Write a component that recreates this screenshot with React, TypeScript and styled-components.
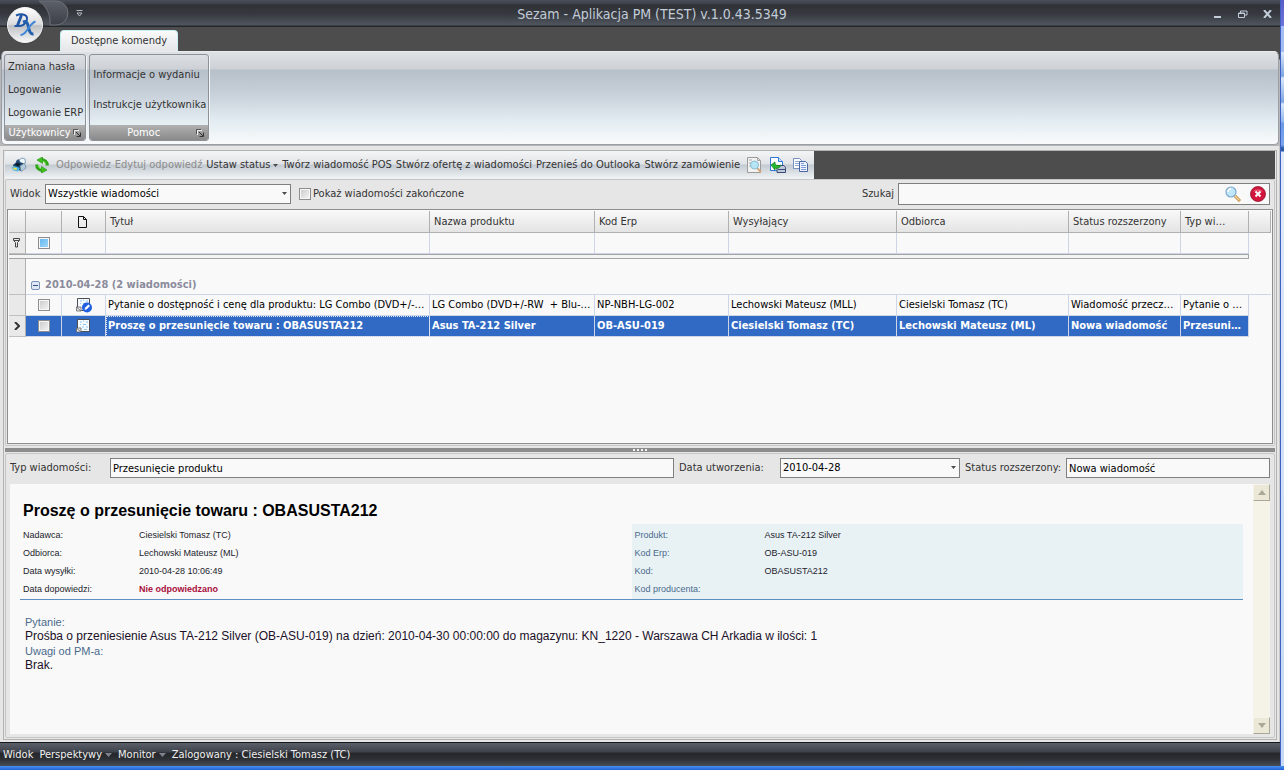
import React from "react";
import styled, { createGlobalStyle, css } from "styled-components";

const UI_FONT = `"DejaVu Sans Condensed", "Noto Sans", sans-serif`;
const DOC_FONT = `"Liberation Sans", Arial, sans-serif`;

const GlobalStyle = createGlobalStyle`
  *, *::before, *::after { box-sizing: border-box; }
  body { margin: 0; background: #2f7ce6; font: 11px/14px ${UI_FONT}; color: #333; }
  button, input, select { font: inherit; color: inherit; margin: 0; }
`;

/* ---------- window frame ---------- */

const Desktop = styled.div`
  display: flex;
  min-height: 100vh;
  padding-bottom: 4px;
  background: linear-gradient(to bottom, #4a90ee, #1f63d6) bottom / 100% 4px no-repeat;
`;

const AppWindow = styled.div`
  flex: 1;
  min-width: 0;
  display: flex;
  flex-direction: column;
  background: #e6e6e6;
`;

const NeighbourWindow = styled.div`
  width: 4px;
  border-left: 1px solid #3d62c4;
  background: linear-gradient(
    to bottom,
    #5a5cc8 0, #6d74d8 26px, #a4bcf4 26px, #a4bcf4 52px,
    #dbe8fa 52px, #7ca4e4 76px, #dbe8fa 78px, #7ca4e4 102px,
    #dbe8fa 104px, #8fb4ee 122px, #6c9ae6 123px, #79a5ee 145px,
    #2c5aa8 148px, #2c5aa8 151px, #dfe9f8 152px, #c6d9f4 100%
  );
`;

const TitleBar = styled.header`
  display: grid;
  grid-template-columns: 1fr auto 1fr;
  align-items: center;
  height: 27px;
  color: #c3ccd9;
  background: linear-gradient(to bottom, #4a4f59 0, #3b3f48 4px, #2f3135 5px, #36393f 14px, #50555e 25px, #23262b 26px, #23262b 27px);
`;

const AppTitle = styled.h1`
  margin: 0;
  padding-left: 24px;
  font-size: 14px;
  font-weight: 400;
  line-height: 16px;
`;

const QuickAccess = styled.div`
  position: relative;
  align-self: stretch;
`;

const LogoDrawing = styled.svg`
  position: absolute;
  left: 0;
  top: 0;
  display: block;
`;

const WindowButtons = styled.div`
  display: flex;
  justify-content: flex-end;
`;

const BareButton = styled.button`
  display: flex;
  align-items: center;
  padding: 0;
  border: 0;
  background: none;
`;

const WindowButton = styled(BareButton)`
  justify-content: center;
  width: 25px;
  height: 20px;
`;

const TabStrip = styled.nav`
  display: flex;
  align-items: flex-end;
  height: 24px;
  padding-left: 60px;
  background: #4d4d4d;
`;

const RibbonTab = styled.button`
  height: 21px;
  padding: 0 10px;
  border: 1px solid #c9eef4;
  border-bottom: 0;
  border-radius: 4px 4px 0 0;
  background: linear-gradient(to bottom, #fafafa, #e4e6e9);
`;

/* ---------- ribbon ---------- */

const RibbonShell = styled.div`
  background: linear-gradient(to bottom, #4d4d4d 0, #4d4d4d 8px, #b8b8b8 9px);
`;

const Ribbon = styled.section`
  display: flex;
  gap: 3px;
  height: 94px;
  margin: 0 1px 0 1px;
  padding: 2px;
  border: 1px solid #9a9ea6;
  border-top-color: #e8eaec;
  border-radius: 5px;
  background: linear-gradient(to bottom, #dfe2e5 0, #cdd1d6 17px, #b7bfc9 18px, #c6ced8 40px, #e3edf2 70px, #f7f9fa 90px);
`;

const RibbonGroup = styled.div`
  display: flex;
  flex-direction: column;
  height: 87px;
  border: 1px solid #8d9299;
  border-radius: 3px;
  overflow: hidden;
  box-shadow: 1px 1px 0 #f5f7f9;
`;

const GroupItems = styled.div<{ $gap: number }>`
  flex: 1;
  display: flex;
  flex-direction: column;
  justify-content: center;
  align-items: flex-start;
  gap: ${(p) => p.$gap}px;
  padding: 0 2px 0 3px;
`;

const GroupCaption = styled.div`
  display: flex;
  align-items: center;
  height: 15px;
  padding: 0 4px 0 1px;
  color: #fff;
  background: linear-gradient(to bottom, #b0b0b0, #8a8a8a);
  & > span { flex: 1; text-align: center; }
`;

/* ---------- work area ---------- */

const Workspace = styled.main`
  flex: 1;
  display: flex;
  flex-direction: column;
  padding: 4px 2px 2px 3px;
  border-top: 1px solid #b4b4b4;
  border-right: 1px solid #c8c8c8;
`;

const WorkFrame = styled.div`
  flex: 1;
  display: flex;
  flex-direction: column;
  border: 1px solid #b2b2b2;
  padding: 0 1px 1px;
`;

const ToolbarRow = styled.div`
  display: flex;
  background: #4d4d4d;
`;

const Toolbar = styled.div`
  display: flex;
  align-items: center;
  gap: 4px;
  height: 28px;
  padding: 0 5px 0 6px;
  background: linear-gradient(to bottom, #f4f5f6 0, #e0e3e6 13px, #c3cad1 14px, #d6dce1 20px, #f2f5f6 28px);
`;

const ToolIcons = styled.div`
  display: flex;
  align-items: center;
  gap: 7px;
  padding-right: 2px;
`;

const TrailingIcons = styled(ToolIcons)`
  padding: 0 0 0 2px;
`;

const ToolButton = styled(BareButton)`
  gap: 3px;
  white-space: nowrap;
  &:disabled { color: #8d8d8d; }
`;

const Pane = styled.section<{ $grow: number }>`
  flex: ${(p) => p.$grow} 1 0;
  display: flex;
  flex-direction: column;
  border: 1px solid #c6c6c6;
  border-radius: 2px;
  background: #e6e6e6;
`;

const FilterBar = styled.div`
  display: flex;
  align-items: center;
  height: 29px;
  padding: 0 4px 1px 4px;
`;

const Label = styled.label<{ $width?: number }>`
  display: block;
  flex: none;
  white-space: nowrap;
  ${(p) => p.$width && css`width: ${p.$width}px;`}
`;

const box = css`
  height: 20px;
  border: 1px solid #7f7f7f;
  border-radius: 0;
  background: #f9f9f9;
  color: #000;
`;

const Combo = styled.span<{ $width: number }>`
  position: relative;
  flex: none;
  width: ${(p) => p.$width}px;
  & > svg { position: absolute; right: 4px; top: 8px; pointer-events: none; }
`;

const Select = styled.select`
  ${box}
  display: block;
  width: 100%;
  padding: 0 16px 0 2px;
  appearance: none;
`;

const TextField = styled.input<{ $width?: number }>`
  ${box}
  min-width: 0;
  padding: 0 2px;
  ${(p) => (p.$width ? css`flex: none; width: ${p.$width}px;` : css`flex: 1;`)}
`;

const Tick = styled.input<{ $tone?: "blue" }>`
  appearance: none;
  flex: none;
  display: block;
  width: 12px;
  height: 12px;
  border: 1px solid #8d8d8d;
  background: ${(p) => (p.$tone === "blue" ? "linear-gradient(135deg, #5fb4f0, #a9dcfa)" : "linear-gradient(135deg, #c9c9c9, #f6f6f6)")};
  box-shadow: inset 0 0 0 1px #f7f7f7;
`;

const ShowClosed = styled.div`
  display: flex;
  align-items: center;
  gap: 2px;
  margin: 0 auto 0 8px;
`;

const SearchBox = styled.div`
  ${box}
  display: flex;
  align-items: center;
  gap: 9px;
  width: 372px;
  height: 22px;
  margin-left: 4px;
  padding-right: 3px;
`;

const SearchInput = styled.input`
  flex: 1;
  min-width: 0;
  border: 0;
  background: none;
  outline: 0;
`;

/* ---------- message grid ---------- */

const GridBox = styled.div`
  flex: 1;
  margin: 0 1px 1px 1px;
  padding: 1px;
  border: 1px solid #8e8e8e;
  background: #f9f9f9;
`;

const Grid = styled.table`
  width: 100%;
  table-layout: fixed;
  border-collapse: separate;
  border-spacing: 0;
`;

const HeadCell = styled.th`
  height: 22px;
  padding: 0 12px 0 4px;
  border-right: 1px solid #b0b0b0;
  border-bottom: 1px solid #b0b0b0;
  background: linear-gradient(to bottom, #f8f8f8, #e4e4e4);
  font-weight: 400;
  text-align: left;
  white-space: nowrap;
  overflow: hidden;
  text-overflow: ellipsis;
  & > svg { display: block; margin: 0 12px; }
`;

const IndicatorCell = styled.td`
  padding: 0;
  border-right: 1px solid #b0b0b0;
  border-bottom: 1px solid #c0c0c0;
  background: #e9e9e9;
  & > svg { display: block; margin: 0 auto; }
`;

const FilterCell = styled.td`
  height: 21px;
  padding: 0;
  border-right: 1px solid #cdd5e6;
  border-bottom: 1px solid #cdd5e6;
  & > input { margin: 0 auto; }
`;

const DividerCell = styled.td`
  height: 5px;
  padding: 0;
  border: 1px solid #a4a4a4;
  border-left: 0;
  background: #f4f4f4;
`;

const GroupCell = styled.td`
  height: 36px;
  padding: 0 4px 2px 5px;
  border-bottom: 1px solid #cdd5e6;
  vertical-align: bottom;
  color: #8b8b9c;
  font-weight: 700;
`;

const GroupToggle = styled(BareButton)`
  gap: 5px;
`;

const Cell = styled.td`
  height: 21px;
  padding: 0 2px;
  border-right: 1px solid #cdd5e6;
  border-bottom: 1px solid #cdd5e6;
  white-space: pre;
  overflow: hidden;
  text-overflow: ellipsis;
  & > input, & > svg { display: block; margin: 0 auto; }
`;

const FocusCell = styled(Cell)`
  outline: 1px dotted #dfe8f6;
  outline-offset: -1px;
`;

const MessageRow = styled.tr<{ $selected?: boolean }>`
  color: #000;
  ${(p) => p.$selected && css`
    font-weight: 700;
    ${Cell} { background: #316ac5; color: #fff; }
  `}
`;

const EmptyCell = styled.td`
  padding: 0;
`;

const Splitter = styled.div`
  display: flex;
  align-items: center;
  justify-content: center;
  gap: 2px;
  height: 4px;
  margin: 2px 0 1px;
  background: #8c8c8c;
  & > i { width: 2px; height: 2px; background: #f4f4f4; }
`;

/* ---------- message preview ---------- */

const Preview = styled.div`
  flex: 1;
  display: flex;
  margin: 1px 4px 3px 4px;
  background: #f9f9f9;
`;

const Doc = styled.article`
  flex: 1;
  min-width: 0;
  padding: 16px 10px 0 10px;
  font: 9px/18px ${DOC_FONT};
  color: #1c1c2c;
`;

const DocTitle = styled.h2`
  margin: 0;
  padding-left: 3px;
  font-size: 16px;
  line-height: 22px;
  color: #000;
`;

const MetaColumns = styled.div`
  display: grid;
  grid-template-columns: 1fr 1fr;
  padding-top: 2px;
  border-bottom: 1px solid #5b8fc4;
`;

const MetaList = styled.dl<{ $shaded?: boolean; $termWidth: number }>`
  display: grid;
  grid-template-columns: ${(p) => p.$termWidth}px 1fr;
  grid-auto-rows: 18px;
  margin: 0;
  padding: 2px 0 1px 3px;
  ${(p) => p.$shaded && css`
    background: #e8f2f5;
    dt { color: #4a6a8c; }
  `}
  dd { margin: 0; }
`;

const Alert = styled.strong`
  color: #a80f3c;
`;

const Body = styled.div`
  padding: 15px 0 0 5px;
  font-size: 12px;
  line-height: 15px;
`;

const BodyLabel = styled.h3`
  margin: 0;
  font-size: 11px;
  line-height: 14px;
  font-weight: 400;
  color: #4a6a8c;
`;

const BodyText = styled.p`
  margin: 0;
  color: #201028;
`;

const DetailLabel = styled(Label)`
  padding-left: 5px;
`;

const ScrollRail = styled.div`
  display: flex;
  flex-direction: column;
  justify-content: space-between;
  width: 17px;
  background: #f5f3e8;
`;

const ScrollButton = styled(BareButton)`
  justify-content: center;
  height: 17px;
  border: 1px solid #f6f4ea;
  border-right-color: #aca899;
  border-bottom-color: #aca899;
  background: #ebe8d8;
`;

/* ---------- status bar ---------- */

const StatusBar = styled.footer`
  display: flex;
  align-items: center;
  height: 24px;
  padding: 0 3px;
  gap: 6px;
  color: #f2f2f2;
  border-top: 1px solid #15171a;
  background: linear-gradient(to bottom, #5a5f69 0, #3e424b 9px, #25272a 10px, #2c2f33 16px, #484c54 23px);
`;

/* ---------- drawings ---------- */

const Caret = ({ color = "#4a4a4a", wide = 5 }: { color?: string; wide?: number }) => (
  <svg width={wide} height={wide > 5 ? 4 : 3} viewBox="0 0 6 4" preserveAspectRatio="none" aria-hidden="true">
    <path d="M0 0h6L3 4z" fill={color} />
  </svg>
);

const Logo = () => (
  <LogoDrawing width="90" height="48" viewBox="0 0 90 48" aria-hidden="true">
    <defs>
      <linearGradient id="orb" x1="0" y1="0" x2="0" y2="1">
        <stop offset="0" stopColor="#ffffff" />
        <stop offset="0.48" stopColor="#dcdcde" />
        <stop offset="0.52" stopColor="#bfc0c3" />
        <stop offset="1" stopColor="#f8f8f8" />
      </linearGradient>
      <linearGradient id="tail" x1="0" y1="0" x2="0" y2="1">
        <stop offset="0" stopColor="#5c6068" />
        <stop offset="1" stopColor="#3c3f46" />
      </linearGradient>
    </defs>
    <path d="M39 1h17a12 12 0 0 1 0 24h-6c1-11-4-19-11-24z" fill="url(#tail)" stroke="#6d717a" />
    <circle cx="25" cy="25" r="18.500" fill="#34373c" />
    <circle cx="25" cy="25" r="17.500" fill="url(#orb)" stroke="#f3f3f3" />
    <path d="M16 15.500c5-2 10-1.500 11 2 .8 3.500-3 8.500-8 8.500h-4.500" fill="none" stroke="#1f55a4" strokeWidth="2" />
    <path d="M21.500 15l-4 10.500" fill="none" stroke="#1f55a4" strokeWidth="2.800" />
    <path d="M23 22c3-1.500 4.500 0 5.500 5 .8 4.500 2 7.500 5 7" fill="none" stroke="#2460ae" strokeWidth="3" />
    <path d="M35.500 21.500c-3.500 1-5.500 4.500-8 8-2 3-4 5.500-7 5.500" fill="none" stroke="#3f87d6" strokeWidth="2" />
    <path d="M76.500 10.500h6" stroke="#b9bec6" />
    <path d="M77 13h5l-2.500 3z" fill="none" stroke="#b9bec6" />
  </LogoDrawing>
);

const MinimizeIcon = () => (
  <svg width="8" height="10" aria-hidden="true"><path d="M0 7h7v2H0z" fill="#c3ccd9" /></svg>
);
const RestoreIcon = () => (
  <svg width="10" height="8" aria-hidden="true">
    <path d="M2.500 3V1H9v4H7" fill="none" stroke="#c3ccd9" />
    <path d="M.5 3h6v4.500h-6zM0 3.500h7" fill="none" stroke="#c3ccd9" />
  </svg>
);
const CloseIcon = () => (
  <svg width="9" height="8" aria-hidden="true"><path d="M1 0l7 8M8 0L1 8" stroke="#c3ccd9" strokeWidth="2" /></svg>
);
const LauncherIcon = () => (
  <svg width="8" height="8" aria-hidden="true">
    <path d="M1.500 6V1.500H6" fill="none" stroke="#eee" />
    <path d="M.5 5V.5H5" fill="none" stroke="#555" />
    <path d="M3 3l4 4M7.500 3.500v4h-4" fill="none" stroke="#333" />
  </svg>
);

const PrinterIcon = () => (
  <svg width="16" height="16" viewBox="0 0 16 16" aria-hidden="true">
    <path d="M8 3l3-2 3 1 .5 4-4 2z" fill="#eef6fb" stroke="#6d8da6" strokeWidth=".8" />
    <path d="M5 4l2.500-2 1.500 3-3 2z" fill="#25507c" />
    <path d="M2 8l4-3.500 6 1.500L14 9l-4 5-7-3z" fill="#1c4468" />
    <path d="M9 9l4.500-3 1.500 5-5 3.500z" fill="#b4cbdc" stroke="#5f7e97" strokeWidth=".6" />
    <path d="M6 6l3.500 1-2.500 2-3-1z" fill="#0a1626" />
    <path d="M.5 10.500l3-1.500 5.500 2-2 3.500-4.500-1z" fill="#4bb4e8" />
    <path d="M2 10.500l3.500.5.500 2-3.500-.5z" fill="#f4e24a" />
  </svg>
);
const RefreshIcon = () => (
  <svg width="16" height="16" viewBox="0 0 16 16" aria-hidden="true">
    <path d="M13.300 8.500A5.400 5.400 0 0 0 7 2.800" fill="none" stroke="#2fa516" strokeWidth="3" />
    <path d="M8.500 0v6.500L3 3z" fill="#3fc41e" stroke="#1f8a0c" strokeWidth=".6" />
    <path d="M2.700 7.500A5.400 5.400 0 0 0 9 13.200" fill="none" stroke="#2fa516" strokeWidth="3" />
    <path d="M7.500 16V9.500L13 13z" fill="#3fc41e" stroke="#1f8a0c" strokeWidth=".6" />
    <path d="M11.800 8A4 4 0 0 0 8.500 4M4.200 8a4 4 0 0 0 3.300 4" fill="none" stroke="#6fe04a" />
  </svg>
);
const PreviewIcon = () => (
  <svg width="16" height="16" viewBox="0 0 16 16" aria-hidden="true">
    <path d="M1.500.5h10l3 3v12h-13z" fill="#f2f2f2" stroke="#9b9b9b" />
    <path d="M11.500.5v3h3M3 3h3M3 6h2M3 9h2" fill="none" stroke="#a8a8a8" />
    <path d="M11 11l4 4" stroke="#d7a877" strokeWidth="2" />
    <circle cx="8.500" cy="8" r="4" fill="#b5e5f6" stroke="#8ebed4" />
  </svg>
);
const ExportIcon = () => (
  <svg width="17" height="17" viewBox="0 0 17 17" aria-hidden="true">
    <path d="M1.500.5h8l4 4v9h-12z" fill="#fff" stroke="#2d78d8" />
    <path d="M9.500.5v4h4" fill="#d4e6fa" stroke="#2d78d8" />
    <path d="M8 8.500h7l1.500 2v5H8z" fill="#bdc8dc" stroke="#3c4c74" />
    <path d="M9 12.500h7" stroke="#3c4c74" />
    <path d="M2 8l4-3v2c2 2 4 2 6 1-1 3-4 4-6 3v2z" fill="#27b62f" stroke="#0e7d19" strokeWidth=".7" />
  </svg>
);
const CopyIcon = () => (
  <svg width="16" height="14" viewBox="0 0 16 14" aria-hidden="true">
    <path d="M.5.5h6l2 2v8h-8z" fill="#fff" stroke="#7790c0" />
    <path d="M2 3.500h4M2 5.500h4M2 7.500h4" stroke="#8fa8d8" />
    <path d="M6.500 3.500h6l2 2v8h-8z" fill="#edf3ff" stroke="#4a66a4" />
    <path d="M8 7.500h5M8 9.500h5M8 11.500h5M8 5.500h3" stroke="#7f9cd8" />
  </svg>
);
const MagnifierIcon = () => (
  <svg width="16" height="16" viewBox="0 0 16 16" aria-hidden="true">
    <path d="M10 10l5 5" stroke="#b98335" strokeWidth="3" />
    <path d="M10 10l4.500 4.500" stroke="#f5d49a" strokeWidth="1.400" />
    <circle cx="6" cy="6" r="5" fill="#bfe6fa" stroke="#7fa9cc" strokeWidth="1.200" />
    <path d="M3 6a3 3 0 0 1 3-3" fill="none" stroke="#fff" strokeWidth="1.500" />
  </svg>
);
const ClearIcon = () => (
  <svg width="16" height="16" viewBox="0 0 16 16" aria-hidden="true">
    <circle cx="8" cy="8" r="7.500" fill="#d3143c" stroke="#8e1530" strokeWidth=".8" />
    <path d="M3 5.500a6 5 0 0 1 10 0z" fill="#ef7088" opacity=".7" />
    <path d="M5.500 5.500l5 5M10.500 5.500l-5 5" stroke="#fff" strokeWidth="2" />
  </svg>
);
const PageIcon = () => (
  <svg width="10" height="12" aria-hidden="true">
    <path d="M.5.5h5l3 3v8h-8zM5.500.5v3h3" fill="none" stroke="#111" />
  </svg>
);
const FunnelIcon = () => (
  <svg width="8" height="10" aria-hidden="true">
    <path d="M.5.500h6v2l-2 2v4.500h-2v-4.500l-2-2zM1 2.500h5" fill="none" stroke="#444" />
  </svg>
);
const RowPointer = () => (
  <svg width="6" height="8" aria-hidden="true"><path d="M1 0l4 4-4 4" fill="none" stroke="#333" strokeWidth="2" /></svg>
);
const CollapseIcon = () => (
  <svg width="9" height="9" aria-hidden="true">
    <rect x=".5" y=".5" width="8" height="8" rx="1.500" fill="#dfe8f6" stroke="#7b92b8" />
    <path d="M2 4.500h5" stroke="#35507c" />
  </svg>
);
const MessageIcon = ({ edited }: { edited?: boolean }) => (
  <svg width="16" height="16" viewBox="0 0 16 16" aria-hidden="true">
    <path d="M1.500 1.500h12v12h-8l-4-3z" fill="#f6fbff" stroke="#4d4d55" />
    <path d="M4 4h2M7 3h1M10 4h2M4 6.500h1M7 6.500h3M6 9h2M10 9h2M8 11.500h3" stroke="#8cc6ef" strokeWidth="1.200" />
    <path d="M.5 10h4.500v4H.5zM.5 10l4.500 4" fill="#e6e6e6" stroke="#666" strokeWidth=".8" />
    {edited && (
      <>
        <circle cx="11" cy="10.500" r="5" fill="#2060e0" />
        <path d="M8.500 13l.8-2.500 3.200-3 1.500 1.500-3.200 3.200z" fill="#fff" />
      </>
    )}
  </svg>
);

/* ---------- data ---------- */

const columns = ["Nazwa produktu", "Kod Erp", "Wysyłający", "Odbiorca", "Status rozszerzony", "Typ wi…"];
const columnWidths = [17, 36, 44, 0, 165, 134, 168, 172, 112, 68, 22];

const messages = [
  {
    title: "Pytanie o dostępność i cenę dla produktu: LG Combo (DVD+/-R…",
    cells: ["LG Combo (DVD+/-RW  + Blu-r…", "NP-NBH-LG-002", "Lechowski Mateusz (MLL)", "Ciesielski Tomasz (TC)", "Wiadomość przeczy…", "Pytanie o …"],
    edited: true,
  },
  {
    title: "Proszę o przesunięcie towaru : OBASUSTA212",
    cells: ["Asus TA-212 Silver", "OB-ASU-019", "Ciesielski Tomasz (TC)", "Lechowski Mateusz (ML)", "Nowa wiadomość", "Przesuni…"],
    selected: true,
  },
];

const senderMeta: [string, React.ReactNode][] = [
  ["Nadawca:", "Ciesielski Tomasz (TC)"],
  ["Odbiorca:", "Lechowski Mateusz (ML)"],
  ["Data wysyłki:", "2010-04-28 10:06:49"],
  ["Data dopowiedzi:", <Alert key="a">Nie odpowiedzano</Alert>],
];

const productMeta: [string, React.ReactNode][] = [
  ["Produkt:", "Asus TA-212 Silver"],
  ["Kod Erp:", "OB-ASU-019"],
  ["Kod:", "OBASUSTA212"],
  ["Kod producenta:", ""],
];

const Meta = ({ rows, shaded, termWidth }: { rows: [string, React.ReactNode][]; shaded?: boolean; termWidth: number }) => (
  <MetaList $shaded={shaded} $termWidth={termWidth}>
    {rows.map(([term, value]) => (
      <React.Fragment key={term}>
        <dt>{term}</dt>
        <dd>{value}</dd>
      </React.Fragment>
    ))}
  </MetaList>
);

const Group = ({ caption, items, gap }: { caption: string; items: string[]; gap: number }) => (
  <RibbonGroup>
    <GroupItems $gap={gap}>
      {items.map((item) => <ToolButton key={item}>{item}</ToolButton>)}
    </GroupItems>
    <GroupCaption>
      <span>{caption}</span>
      <BareButton aria-label={caption}><LauncherIcon /></BareButton>
    </GroupCaption>
  </RibbonGroup>
);

export default function App() {
  return (
    <>
      <GlobalStyle />
      <Desktop>
        <AppWindow>
          <TitleBar>
            <QuickAccess><Logo /></QuickAccess>
            <AppTitle>Sezam - Aplikacja PM (TEST) v.1.0.43.5349</AppTitle>
            <WindowButtons>
              <WindowButton aria-label="Minimalizuj"><MinimizeIcon /></WindowButton>
              <WindowButton aria-label="Przywróć"><RestoreIcon /></WindowButton>
              <WindowButton aria-label="Zamknij"><CloseIcon /></WindowButton>
            </WindowButtons>
          </TitleBar>
          <TabStrip>
            <RibbonTab>Dostępne komendy</RibbonTab>
          </TabStrip>
          <RibbonShell>
            <Ribbon>
              <Group caption="Użytkownicy" items={["Zmiana hasła", "Logowanie", "Logowanie ERP"]} gap={9} />
              <Group caption="Pomoc" items={["Informacje o wydaniu", "Instrukcje użytkownika"]} gap={16} />
            </Ribbon>
          </RibbonShell>

          <Workspace>
            <WorkFrame>
              <ToolbarRow>
                <Toolbar>
                  <ToolIcons>
                    <BareButton aria-label="Drukuj"><PrinterIcon /></BareButton>
                    <BareButton aria-label="Odśwież"><RefreshIcon /></BareButton>
                  </ToolIcons>
                  <ToolButton disabled>Odpowiedz</ToolButton>
                  <ToolButton disabled>Edytuj odpowiedź</ToolButton>
                  <ToolButton>Ustaw status <Caret /></ToolButton>
                  <ToolButton>Twórz wiadomość POS</ToolButton>
                  <ToolButton>Stwórz ofertę z wiadomości</ToolButton>
                  <ToolButton>Przenieś do Outlooka</ToolButton>
                  <ToolButton>Stwórz zamówienie</ToolButton>
                  <TrailingIcons>
                    <BareButton aria-label="Podgląd"><PreviewIcon /></BareButton>
                    <BareButton aria-label="Eksportuj"><ExportIcon /></BareButton>
                    <BareButton aria-label="Kopiuj"><CopyIcon /></BareButton>
                  </TrailingIcons>
                </Toolbar>
              </ToolbarRow>

              <Pane $grow={268}>
                <FilterBar>
                  <Label htmlFor="view" $width={35}>Widok</Label>
                  <Combo $width={246}>
                    <Select id="view"><option>Wszystkie wiadomości</option></Select>
                    <Caret />
                  </Combo>
                  <ShowClosed>
                    <Tick id="closed" type="checkbox" />
                    <Label htmlFor="closed">Pokaż wiadomości zakończone</Label>
                  </ShowClosed>
                  <Label htmlFor="search">Szukaj</Label>
                  <SearchBox>
                    <SearchInput id="search" type="text" />
                    <BareButton aria-label="Szukaj"><MagnifierIcon /></BareButton>
                    <BareButton aria-label="Wyczyść"><ClearIcon /></BareButton>
                  </SearchBox>
                </FilterBar>
                <GridBox>
                  <Grid>
                    <colgroup>
                      {columnWidths.map((w, i) => <col key={i} width={w || undefined} />)}
                    </colgroup>
                    <thead>
                      <tr>
                        <HeadCell />
                        <HeadCell />
                        <HeadCell><PageIcon /></HeadCell>
                        <HeadCell>Tytuł</HeadCell>
                        {columns.map((c) => <HeadCell key={c}>{c}</HeadCell>)}
                        <HeadCell />
                      </tr>
                    </thead>
                    <tbody>
                      <tr>
                        <IndicatorCell><FunnelIcon /></IndicatorCell>
                        <FilterCell><Tick type="checkbox" $tone="blue" aria-label="Filtr zaznaczenia" /></FilterCell>
                        <FilterCell />
                        <FilterCell />
                        {columns.map((c) => <FilterCell key={c} />)}
                        <EmptyCell />
                      </tr>
                      <tr>
                        <DividerCell colSpan={10} />
                        <EmptyCell />
                      </tr>
                      <tr>
                        <IndicatorCell />
                        <GroupCell colSpan={10}>
                          <GroupToggle><CollapseIcon /> 2010-04-28 (2 wiadomości)</GroupToggle>
                        </GroupCell>
                      </tr>
                      {messages.map((m) => {
                        const TitleCell = m.selected ? FocusCell : Cell;
                        return (
                          <MessageRow key={m.title} $selected={m.selected}>
                            <IndicatorCell>{m.selected && <RowPointer />}</IndicatorCell>
                            <Cell><Tick type="checkbox" aria-label={m.title} /></Cell>
                            <Cell><MessageIcon edited={m.edited} /></Cell>
                            <TitleCell>{m.title}</TitleCell>
                            {m.cells.map((c) => <Cell key={c}>{c}</Cell>)}
                            <EmptyCell />
                          </MessageRow>
                        );
                      })}
                    </tbody>
                  </Grid>
                </GridBox>
              </Pane>

              <Splitter><i /><i /><i /><i /></Splitter>

              <Pane $grow={286}>
                <FilterBar>
                  <Label htmlFor="type" $width={100}>Typ wiadomości:</Label>
                  <TextField id="type" readOnly defaultValue="Przesunięcie produktu" />
                  <DetailLabel htmlFor="created" $width={106}>Data utworzenia:</DetailLabel>
                  <Combo $width={180}>
                    <Select id="created"><option>2010-04-28</option></Select>
                    <Caret />
                  </Combo>
                  <DetailLabel htmlFor="status" $width={106}>Status rozszerzony:</DetailLabel>
                  <TextField id="status" $width={204} readOnly defaultValue="Nowa wiadomość" />
                </FilterBar>
                <Preview>
                  <Doc>
                    <DocTitle>Proszę o przesunięcie towaru : OBASUSTA212</DocTitle>
                    <MetaColumns>
                      <Meta rows={senderMeta} termWidth={116} />
                      <Meta rows={productMeta} termWidth={130} shaded />
                    </MetaColumns>
                    <Body>
                      <BodyLabel>Pytanie:</BodyLabel>
                      <BodyText>
                        Prośba o przeniesienie Asus TA-212 Silver (OB-ASU-019) na dzień: 2010-04-30 00:00:00 do magazynu: KN_1220 - Warszawa CH Arkadia w ilości: 1
                      </BodyText>
                      <BodyLabel>Uwagi od PM-a:</BodyLabel>
                      <BodyText>Brak.</BodyText>
                    </Body>
                  </Doc>
                  <ScrollRail>
                    <ScrollButton aria-label="W górę">
                      <svg width="8" height="5" aria-hidden="true"><path d="M4 0l4 5H0z" fill="#aca899" /></svg>
                    </ScrollButton>
                    <ScrollButton aria-label="W dół">
                      <svg width="8" height="5" aria-hidden="true"><path d="M4 5l4-5H0z" fill="#aca899" /></svg>
                    </ScrollButton>
                  </ScrollRail>
                </Preview>
              </Pane>
            </WorkFrame>
          </Workspace>

          <StatusBar>
            <ToolButton>Widok</ToolButton>
            <ToolButton>Perspektywy <Caret color="#7d828c" wide={7} /></ToolButton>
            <ToolButton>Monitor <Caret color="#7d828c" wide={7} /></ToolButton>
            <span>Zalogowany : Ciesielski Tomasz (TC)</span>
          </StatusBar>
        </AppWindow>
        <NeighbourWindow />
      </Desktop>
    </>
  );
}
